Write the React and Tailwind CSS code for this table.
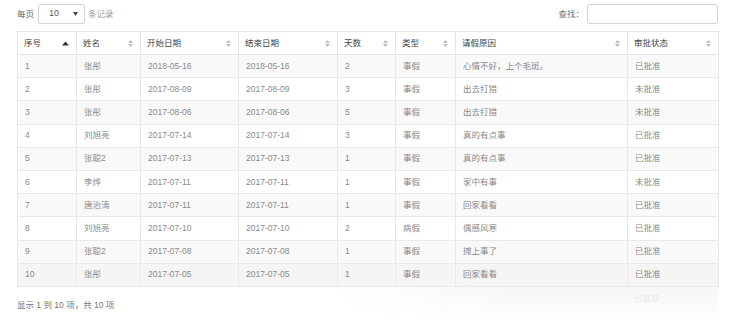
import React from "react";

const rows = [
  ["1", "张彤", "2018-05-16", "2018-05-16", "2", "事假", "心情不好，上个毛斑。", "已批准"],
  ["2", "张彤", "2017-08-09", "2017-08-09", "3", "事假", "出去打猎", "未批准"],
  ["3", "张彤", "2017-08-06", "2017-08-06", "5", "事假", "出去打猎", "未批准"],
  ["4", "刘旭亮", "2017-07-14", "2017-07-14", "3", "事假", "真的有点事", "已批准"],
  ["5", "张聪2", "2017-07-13", "2017-07-13", "1", "事假", "真的有点事", "已批准"],
  ["6", "李烨", "2017-07-11", "2017-07-11", "1", "事假", "家中有事", "未批准"],
  ["7", "唐治涛", "2017-07-11", "2017-07-11", "1", "事假", "回家看看", "已批准"],
  ["8", "刘旭亮", "2017-07-10", "2017-07-10", "2", "病假", "偶感风寒", "已批准"],
  ["9", "张聪2", "2017-07-08", "2017-07-08", "1", "事假", "摊上事了", "已批准"],
  ["10", "张彤", "2017-07-05", "2017-07-05", "1", "事假", "回家看看", "已批准"],
];

const columns = [
  { label: "序号", w: "w-[59px]", active: true },
  { label: "姓名", w: "w-[64px]" },
  { label: "开始日期", w: "w-[98px]" },
  { label: "结束日期", w: "w-[99px]" },
  { label: "天数", w: "w-[58px]" },
  { label: "类型", w: "w-[60px]" },
  { label: "请假原因", w: "w-[172px]" },
  { label: "审批状态", w: "w-[91px]" },
];

function SortIcon({ active }) {
  if (active) {
    return (
      <svg width="7" height="5" viewBox="0 0 7 5" className="shrink-0">
        <path d="M0 4.5 L3.5 0.5 L7 4.5 Z" fill="#333" />
      </svg>
    );
  }
  return (
    <svg width="5" height="7" viewBox="0 0 5 7" className="shrink-0">
      <path d="M0 3 L2.5 0 L5 3 Z" fill="#bdbdbd" />
      <path d="M0 4 L2.5 7 L5 4 Z" fill="#bdbdbd" />
    </svg>
  );
}

export default function App() {
  return (
    <div
      className="relative h-[321px] w-[735px] overflow-hidden bg-white px-[17px] pt-[4px] text-[8.5px] text-[#777]"
      style={{ fontFamily: '"Liberation Sans Narrow", "Liberation Sans", "Noto Sans CJK SC", sans-serif' }}
    >
      {/* toolbar */}
      <div className="flex h-[20px] items-center justify-between">
        <div className="flex items-center text-[#666]">
          <span>每页</span>
          <div className="ml-[4px] flex h-[20px] w-[47px] items-center justify-between rounded-[2px] border border-[#d5d5d5] pl-[10px] pr-[6px] text-[#555]">
            <span className="text-[9px]">10</span>
            <svg width="5" height="4" viewBox="0 0 5 4">
              <path d="M0 0 L5 0 L2.5 4 Z" fill="#444" />
            </svg>
          </div>
          <span className="ml-[3px] text-[#999]">条记录</span>
        </div>
        <div className="flex items-center text-[#777]">
          <span className="mr-[3px]">查找：</span>
          <div className="h-[20px] w-[131px] rounded-[2px] border border-[#d5d5d5]" />
        </div>
      </div>

      {/* table */}
      <table className="mt-[7px] w-[701px] table-fixed border-collapse">
        <thead>
          <tr className="h-[23px]">
            {columns.map((c) => (
              <th
                key={c.label}
                className={`${c.w} border border-[#e6e6e6] pl-[6px] pr-[7px] text-left font-normal text-[#444]`}
              >
                <div className="flex items-center justify-between">
                  <span>{c.label}</span>
                  <SortIcon active={c.active} />
                </div>
              </th>
            ))}
          </tr>
        </thead>
        <tbody>
          {rows.map((r, i) => (
            <tr
              key={r[0]}
              className={`h-[23.2px] ${i === 9 ? "bg-[#f5f5f5]" : i % 2 === 0 ? "bg-[#f9f9f9]" : "bg-white"}`}
            >
              {r.map((cell, j) => (
                <td key={j} className="border border-[#e9e9e9] pl-[7px] pr-[6px] text-[#8a8a8a]">
                  {cell}
                </td>
              ))}
            </tr>
          ))}
        </tbody>
      </table>

      {/* footer */}
      <div className="mt-[12px] text-[#777]">显示 1 到 10 项，共 10 项</div>

      {/* faint reflection under table */}
      <div className="pointer-events-none absolute left-[330px] top-[287px] h-[34px] w-[388px] bg-gradient-to-b from-[#f3f3f3] to-white opacity-70 [mask-image:linear-gradient(to_right,transparent,black_45%)]" />
      <div className="pointer-events-none absolute left-[634px] top-[292px] text-[#e8e8e8]">已批准</div>
    </div>
  );
}
